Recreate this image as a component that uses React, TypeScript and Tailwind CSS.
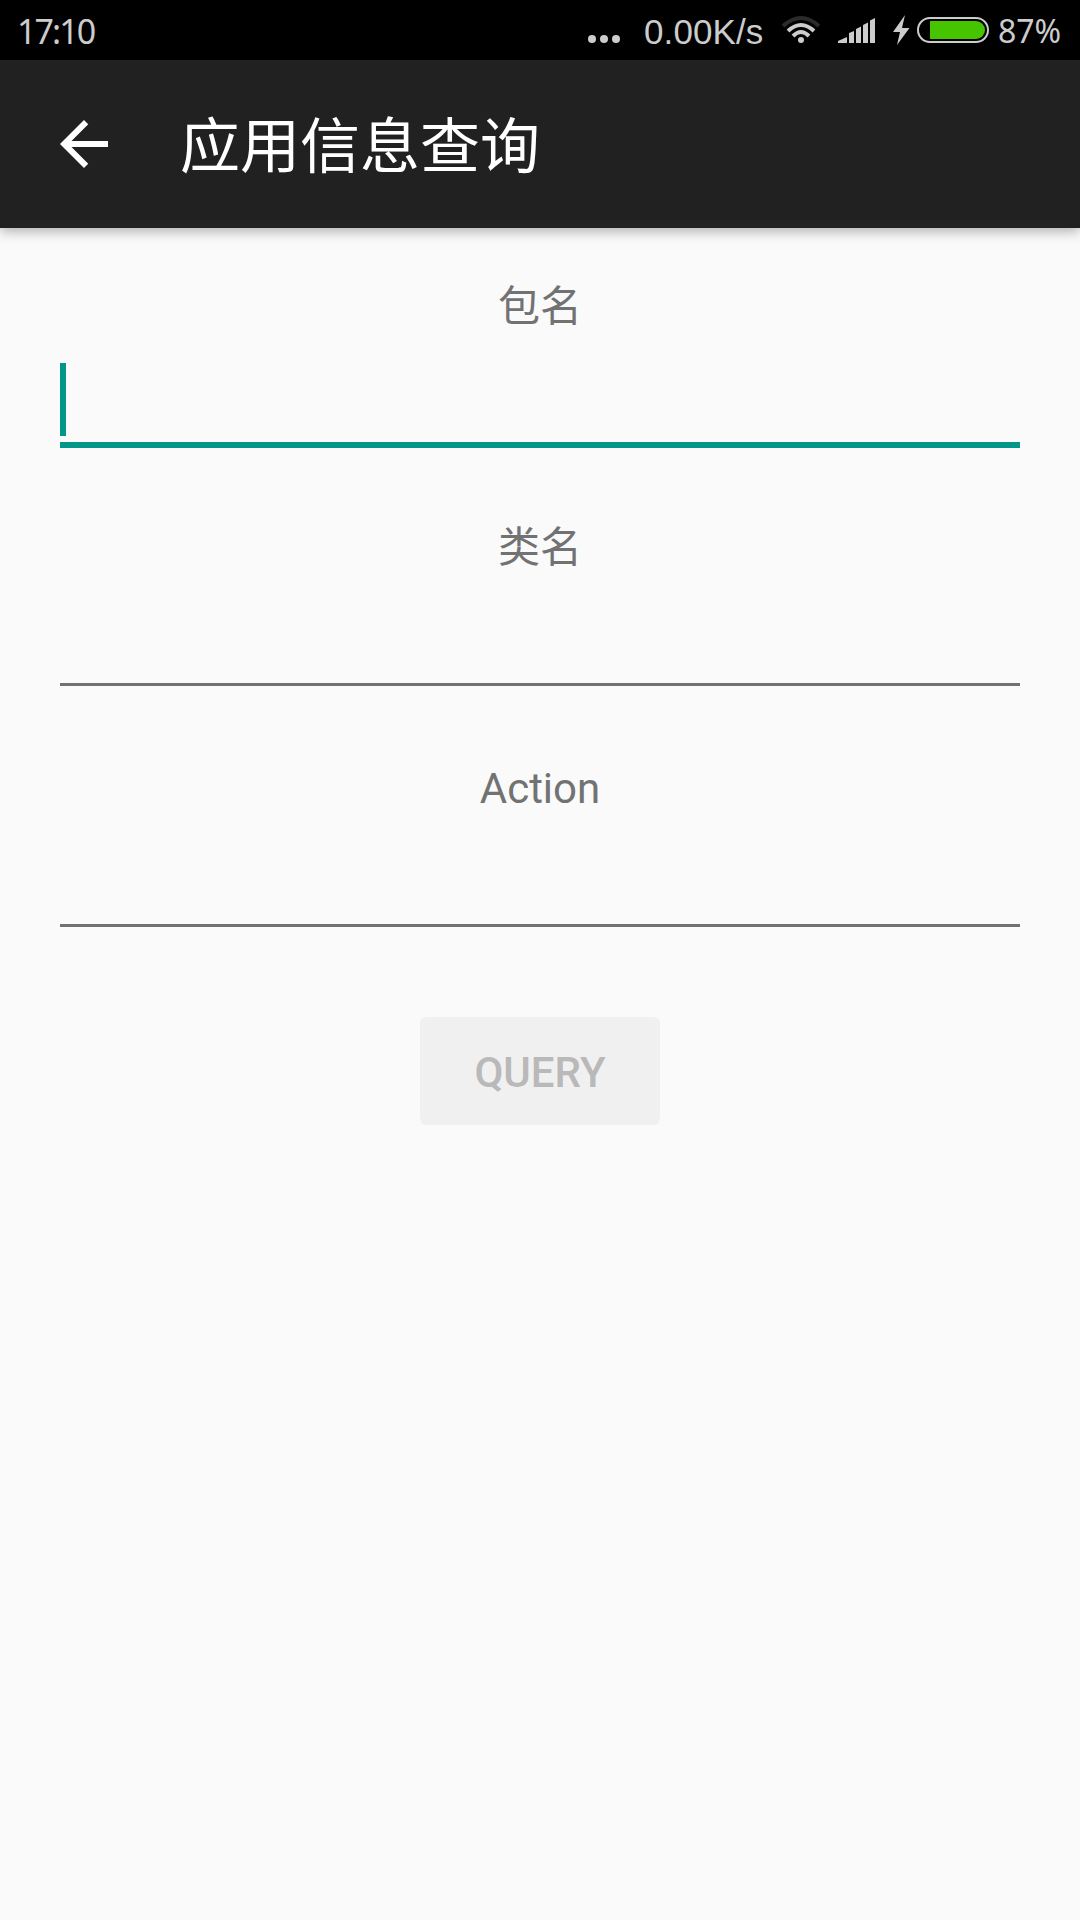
const labelClass =
  "flex h-[63px] items-center justify-center pt-[3px] text-[42px] leading-none text-[#727272]";

function StatusBar() {
  return (
    <div className="flex h-[60px] shrink-0 items-center bg-black font-['Liberation_Sans',sans-serif] text-[34px] leading-none text-[#cccccc]">
      <span className="ml-[17px] mt-[2px] w-[84px] whitespace-nowrap font-['Noto_Sans',sans-serif] tracking-[-1.9px]">17:10</span>
      <div className="ml-auto flex h-full items-center">
        <svg className="h-[60px] w-[34px]" viewBox="587 0 34 60" fill="#cccccc">
          <circle cx="592" cy="39" r="4" />
          <circle cx="604" cy="39" r="4" />
          <circle cx="616" cy="39" r="4" />
        </svg>
        <span className="ml-[23px] mt-[2px] w-[120px] whitespace-nowrap text-[35px] tracking-[0.100px]">0.00K/s</span>
        <svg className="ml-[17px] h-[60px] w-[40px]" viewBox="781 0 40 60" fill="none" stroke="#cccccc" strokeWidth="4">
          <path d="M783 26Q801 10 819 26" stroke="#2b2b2b" />
          <path d="M788 31Q801 19 814 31" />
          <path d="M793 36Q801 28 809 36" />
          <circle cx="801" cy="40" r="3" fill="#cccccc" stroke="none" />
        </svg>
        <svg className="ml-[17px] h-[60px] w-[38px]" viewBox="838 0 38 60" fill="#cccccc">
          <path d="M838 43V41L847 37V43ZM849 43V33L854 31V43ZM856 43V29L861 26.500V43ZM863 43V25L868 22.500V43ZM870 43V20.500L875 18V43Z" />
        </svg>
        <svg className="ml-[16px] h-[60px] w-[18px]" viewBox="892 0 18 60" fill="#cccccc">
          <path d="M905 15L893 32H900L897 45L909.500 28H902Z" />
        </svg>
        <svg className="ml-[7px] h-[60px] w-[72px]" viewBox="917 0 72 60">
          <rect x="918" y="18" width="70" height="24" rx="12" fill="none" stroke="#cccccc" strokeWidth="2" />
          <path d="M930 21H976A9 9 0 0 1 976 39H930Z" fill="#47c400" />
        </svg>
        <span className="ml-[9px] mr-[17px] mt-[2px] w-[65px] whitespace-nowrap font-['Noto_Sans',sans-serif] text-[32px]">87%</span>
      </div>
    </div>
  );
}

function AppBar() {
  return (
    <header className="relative flex h-[168px] shrink-0 items-center bg-[#212121] pl-[48px] shadow-[0_3px_12px_rgba(0,0,0,0.32)]">
      <svg className="size-[72px]" viewBox="0 0 24 24" fill="#ffffff">
        <path d="M20 11H7.830l5.590-5.590L12 4l-8 8 8 8 1.410-1.410L7.830 13H20v-2z" />
      </svg>
      <h1 className="ml-[60px] pt-[8px] whitespace-nowrap text-[60px] leading-none text-white">应用信息查询</h1>
    </header>
  );
}

export default function App() {
  return (
    <div className="flex h-[1920px] w-[1080px] flex-col overflow-hidden bg-[#fafafa] font-['Roboto','Noto_Sans_CJK_SC',sans-serif]">
      <StatusBar />
      <AppBar />
      <main className="flex flex-col px-[60px] pt-[46px]">
        <div className={labelClass}>包名</div>
        <div className="mt-[26px] flex h-[85px] items-start border-b-[6px] border-[#009688]">
          <div className="h-[73px] w-[6px] bg-[#009688]" />
        </div>
        <div className="mt-[67px]">
          <div className={labelClass}>类名</div>
        </div>
        <div className="mt-[26px] h-[82px] border-b-[3px] border-[#727272]" />
        <div className="mt-[70px]">
          <div className={labelClass}>Action</div>
        </div>
        <div className="mt-[26px] h-[82px] border-b-[3px] border-[#727272]" />
        <button
          disabled
          className="mt-[90px] flex h-[108px] w-[240px] items-center justify-center self-center rounded-[6px] bg-[#f0f0f0] pt-[4px] text-[42px] leading-none font-medium text-[#b9b9b9]"
        >
          QUERY
        </button>
      </main>
    </div>
  );
}
